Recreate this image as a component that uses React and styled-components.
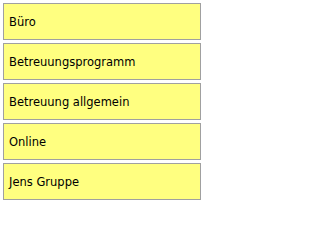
import React from "react";
import styled, { createGlobalStyle } from "styled-components";

const GlobalStyle = createGlobalStyle`
  body {
    margin: 0;
    background: #fff;
    font-family: "DejaVu Sans", Verdana, sans-serif;
  }
`;

const List = styled.div`
  display: flex;
  flex-direction: column;
  gap: 3px;
  padding: 3px 1px 3px 3px;
  width: 198px;
`;

const Item = styled.div`
  display: flex;
  align-items: center;
  height: 35px;
  padding: 1px 0 0 5px;
  box-sizing: border-box;
  height: 37px;
  background-color: #ffff80;
  border: 1px solid #a0a0a0;
  font-size: 11.5px;
  color: #000;
`;

const items = ["Büro", "Betreuungsprogramm", "Betreuung allgemein", "Online", "Jens Gruppe"];

export default function App() {
  return (
    <>
      <GlobalStyle />
      <List>
        {items.map((label) => (
          <Item key={label}>{label}</Item>
        ))}
      </List>
    </>
  );
}
